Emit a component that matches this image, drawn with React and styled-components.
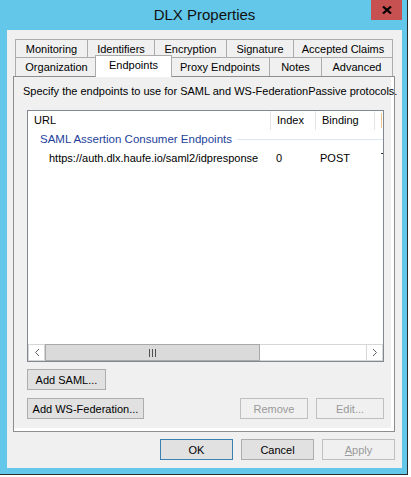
import { createGlobalStyle, styled, css } from 'styled-components';

const GlobalStyle = createGlobalStyle`
  body {
    margin: 0;
    background: #ffffff;
    font-family: "Liberation Sans", Arial, sans-serif;
    font-size: 11px;
    color: #000;
  }
`;

const tabRows = [
  [
    { label: 'Monitoring', width: 72 },
    { label: 'Identifiers', width: 67 },
    { label: 'Encryption', width: 72 },
    { label: 'Signature', width: 67 },
    { label: 'Accepted Claims', width: 100 },
  ],
  [
    { label: 'Organization', width: 82 },
    { label: 'Endpoints', width: 73, selected: true },
    { label: 'Proxy Endpoints', width: 99 },
    { label: 'Notes', width: 52 },
    { label: 'Advanced', width: 72 },
  ],
];

const Window = styled.div`
  box-sizing: border-box;
  width: 408px;
  height: 475px;
  background: #62c7e8;
  border-right: 1px solid #2b2b2b;
  border-bottom: 1px solid #2b2b2b;
  padding: 0 5px 6px 7px;
  display: flex;
  flex-direction: column;
`;

const TitleBar = styled.div`
  height: 30px;
  display: grid;
  grid-template-columns: 1fr auto 1fr;
  align-items: start;
`;

const Title = styled.div`
  grid-column: 2;
  font-size: 15px;
  line-height: 29px;
  color: #111;
`;

const CloseButton = styled.div`
  grid-column: 3;
  justify-self: end;
  width: 31px;
  height: 20px;
  background: #c75050;
  display: flex;
  align-items: center;
  justify-content: center;
`;

const Client = styled.div`
  flex: 1;
  background: #f0f0f0;
  padding: 9px 7px 8px 6px;
  display: flex;
  flex-direction: column;
`;

const TabStrip = styled.div`
  margin-left: 2px;
  display: flex;
  flex-direction: column;
`;

const TabRow = styled.div`
  display: flex;
  align-items: flex-end;
  height: ${p => p.$h}px;
`;

const Tab = styled.div`
  box-sizing: border-box;
  width: ${p => p.$w}px;
  height: 100%;
  border-top: 1px solid #acacac;
  border-left: 1px solid #acacac;
  &:last-child { border-right: 1px solid #acacac; }
  background: #f0f0f0;
  display: flex;
  align-items: center;
  justify-content: center;
  white-space: nowrap;
  ${p => p.$selected && css`
    position: relative;
    z-index: 2;
    width: ${p.$w + 4}px;
    margin: -2px -2px -1px;
    height: calc(100% + 3px);
    background: #ffffff;
    border-right: 1px solid #acacac;
    padding-bottom: 3px;
    & + div { border-left-color: transparent; }
  `}
`;

const Panel = styled.div`
  box-sizing: border-box;
  height: 356px;
  border: 1px solid #8d8e90;
  box-shadow: inset -3px -3px 0 #ffffff;
  background: #f0f0f0;
  padding: 7px 11px 0 9px;
  display: flex;
  flex-direction: column;
`;

const Description = styled.div`
  line-height: 14px;
  white-space: nowrap;
`;

const ListView = styled.div`
  box-sizing: border-box;
  margin: 12px 0 0 4px;
  width: 357px;
  height: 252px;
  border: 1px solid #828790;
  background: #ffffff;
  display: flex;
  flex-direction: column;
  overflow: hidden;
`;

const HeaderRow = styled.div`
  display: flex;
  height: 19px;
  flex-shrink: 0;
`;

const HeaderCell = styled.div`
  box-sizing: border-box;
  width: ${p => p.$w}px;
  flex-shrink: 0;
  padding-left: 6px;
  border-right: 1px solid #e5e5e5;
  line-height: 18px;
  white-space: nowrap;
  overflow: hidden;
`;

const HeaderStub = styled.div`
  flex-shrink: 0;
  width: 6px;
  border-right: 1px solid #e8c98a;
  margin: 2px 0;
`;

const GroupRow = styled.div`
  display: flex;
  align-items: center;
  height: 18px;
  padding-left: 12px;
  color: #1e3f9b;
  font-size: 11.5px;
  gap: 5px;
  &::after {
    content: '';
    flex: 1;
    height: 1px;
    background: #dbe7f5;
  }
`;

const DataRow = styled.div`
  display: flex;
  height: 19px;
  align-items: center;
  white-space: nowrap;
`;

const Cell = styled.div`
  box-sizing: border-box;
  width: ${p => p.$w}px;
  flex-shrink: 0;
  padding-left: ${p => p.$pad}px;
  overflow: hidden;
`;

const ClippedMark = styled.div`
  align-self: flex-start;
  margin-top: 5px;
  width: 2px;
  height: 1px;
  background: #333;
`;

const RowFill = styled.div`
  flex: 1;
`;

const ScrollBar = styled.div`
  display: flex;
  height: 17px;
  flex-shrink: 0;
  background: #ffffff;
`;

const ScrollArrow = styled.div`
  box-sizing: border-box;
  width: 17px;
  border: 1px solid #d6d6d6;
  background: #ffffff;
  display: flex;
  align-items: center;
  justify-content: center;
`;

const ScrollThumb = styled.div`
  box-sizing: border-box;
  width: 215px;
  background: #dadada;
  border: 1px solid #a8a8a8;
  display: flex;
  align-items: center;
  justify-content: center;
`;

const ScrollTrack = styled.div`
  flex: 1;
  border-top: 1px solid #d6d6d6;
  border-bottom: 1px solid #d6d6d6;
`;

const ButtonRow = styled.div`
  display: flex;
  gap: 8px;
  width: 357px;
  margin: ${p => p.$top}px 0 0 4px;
`;

const Button = styled.div`
  box-sizing: border-box;
  width: ${p => p.$w}px;
  height: 21px;
  border: 1px solid ${p => (p.$default ? '#3c7fb1' : p.$disabled ? '#bfbfbf' : '#adadad')};
  background: ${p => (p.$disabled ? '#f0f0f0' : '#e1e1e1')};
  color: ${p => (p.$disabled ? '#9a9a9a' : '#000')};
  display: flex;
  align-items: center;
  justify-content: center;
  white-space: nowrap;
  ${p => p.$push && css`margin-left: auto;`}
`;

const Footer = styled.div`
  display: flex;
  justify-content: flex-end;
  gap: 8px;
  margin-top: 7px;
`;

const Mnemonic = styled.span`
  text-decoration: underline;
`;

function CloseGlyph() {
  return (
    <svg width="10" height="8" viewBox="0 0 10 8">
      <path d="M1 0.5 L9 7.5 M9 0.5 L1 7.5" stroke="#000" strokeWidth="2.2" />
    </svg>
  );
}

function Chevron({ dir }) {
  const d = dir === 'left' ? 'M5 1 L1.5 4.5 L5 8' : 'M1 1 L4.5 4.5 L1 8';
  return (
    <svg width="6" height="9" viewBox="0 0 6 9">
      <path d={d} stroke="#606060" strokeWidth="1" fill="none" />
    </svg>
  );
}

function Grip() {
  return (
    <svg width="7" height="8" viewBox="0 0 7 8">
      <path d="M0.5 0 V8 M3.5 0 V8 M6.5 0 V8" stroke="#505050" strokeWidth="1" />
    </svg>
  );
}

export default function App() {
  return (
    <>
      <GlobalStyle />
      <Window>
        <TitleBar>
          <Title>DLX Properties</Title>
          <CloseButton><CloseGlyph /></CloseButton>
        </TitleBar>
        <Client>
          <TabStrip>
            {tabRows.map((row, i) => (
              <TabRow key={i} $h={i === 0 ? 18 : 19}>
                {row.map(t => (
                  <Tab key={t.label} $w={t.width} $selected={t.selected}>{t.label}</Tab>
                ))}
              </TabRow>
            ))}
          </TabStrip>
          <Panel>
            <Description>Specify the endpoints to use for SAML and WS-FederationPassive protocols.</Description>
            <ListView>
              <HeaderRow>
                <HeaderCell $w={243}>URL</HeaderCell>
                <HeaderCell $w={45}>Index</HeaderCell>
                <HeaderCell $w={59}>Binding</HeaderCell>
                <HeaderStub />
              </HeaderRow>
              <GroupRow>SAML Assertion Consumer Endpoints</GroupRow>
              <DataRow>
                <Cell $w={248} $pad={21}>https://auth.dlx.haufe.io/saml2/idpresponse</Cell>
                <Cell $w={44} $pad={0}>0</Cell>
                <Cell $w={61} $pad={0}>POST</Cell>
                <ClippedMark />
              </DataRow>
              <RowFill />
              <ScrollBar>
                <ScrollArrow><Chevron dir="left" /></ScrollArrow>
                <ScrollThumb><Grip /></ScrollThumb>
                <ScrollTrack />
                <ScrollArrow><Chevron dir="right" /></ScrollArrow>
              </ScrollBar>
            </ListView>
            <ButtonRow $top={7}>
              <Button $w={79}>Add SAML...</Button>
            </ButtonRow>
            <ButtonRow $top={8}>
              <Button $w={117}>Add WS-Federation...</Button>
              <Button $w={68} $disabled $push>Remove</Button>
              <Button $w={68} $disabled>Edit...</Button>
            </ButtonRow>
          </Panel>
          <Footer>
            <Button $w={73} $default>OK</Button>
            <Button $w={73}>Cancel</Button>
            <Button $w={73} $disabled><span><Mnemonic>A</Mnemonic>pply</span></Button>
          </Footer>
        </Client>
      </Window>
    </>
  );
}
